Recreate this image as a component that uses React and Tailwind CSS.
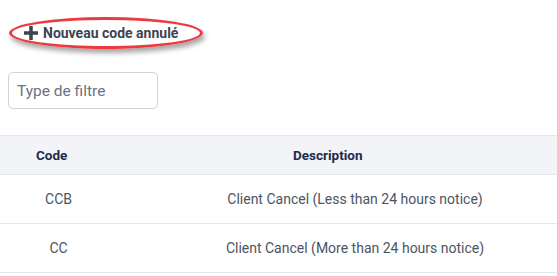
import React from "react";

export default function App() {
  return (
    <div className="w-[557px] h-[276px] bg-white overflow-hidden" style={{ fontFamily: "Roboto, 'Liberation Sans', sans-serif" }}>
      <div className="pt-[17px] pl-[9px]">
        <div className="relative w-[194px] h-[32px] rounded-[50%] border-[3px] border-[#ec3b40] shadow-[2px_4px_5px_rgba(0,0,0,0.35)] flex items-center pl-[12px] gap-[5px]">
          <svg width="14" height="14" viewBox="0 0 14 14" className="shrink-0">
            <rect x="5.25" y="0" width="3.5" height="14" fill="#3d4452" />
            <rect x="0" y="5.25" width="14" height="3.5" fill="#3d4452" />
          </svg>
          <span className="text-[14px] font-bold text-[#3d4452] leading-none">Nouveau code annulé</span>
        </div>
      </div>
      <div className="pl-[8px] pt-[23px]">
        <input
          className="w-[150px] h-[37px] rounded-[5px] border border-[#cfd2da] px-[8px] text-[15.5px] text-[#374151] placeholder:text-[#6b7280] outline-none"
          placeholder="Type de filtre"
        />
      </div>
      <div className="mt-[26px]">
        <div className="flex h-[40px] items-center bg-[#f3f4f8] border-y border-[#e4e6eb] text-[13.5px] font-bold text-[#1e2a4a]">
          <div className="w-[117px] pl-[36px]">Code</div>
          <div className="flex-1 pl-[176px]">Description</div>
        </div>
        {[
          ["CCB", "Client Cancel (Less than 24 hours notice)"],
          ["CC", "Client Cancel (More than 24 hours notice)"],
        ].map(([c, d]) => (
          <div key={c} className="flex h-[49px] items-center border-b border-[#e4e6eb] text-[14px] text-[#4b5563]">
            <div className="w-[117px] text-center">{c}</div>
            <div className="flex-1 text-center pl-[36px]">{d}</div>
          </div>
        ))}
      </div>
    </div>
  );
}
